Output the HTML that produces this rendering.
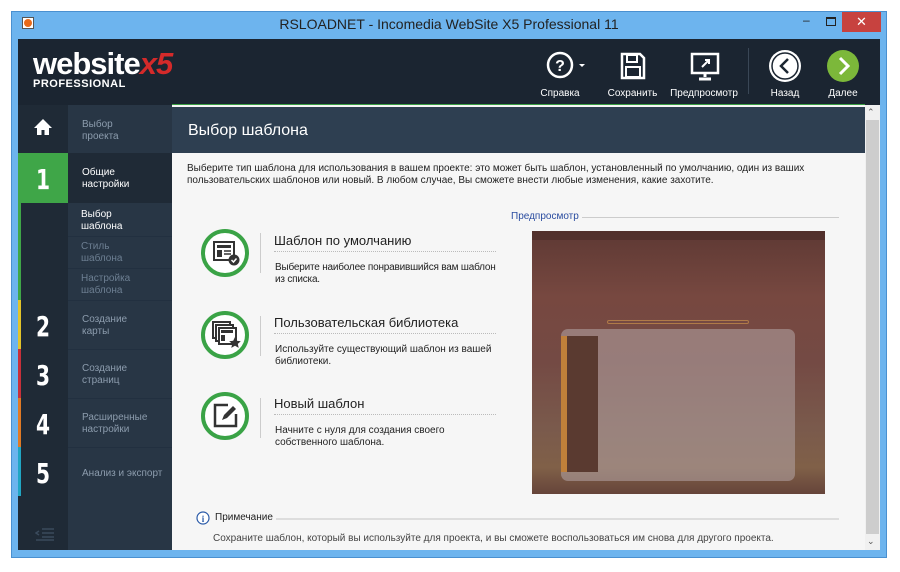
<!DOCTYPE html>
<html><head><meta charset="utf-8"><style>
*{margin:0;padding:0;box-sizing:border-box}
body{width:900px;height:572px;background:#fff;position:relative;overflow:hidden;font-family:"Liberation Sans","DejaVu Sans",sans-serif}
.a{position:absolute}
.win{left:11px;top:11px;width:876px;height:547px;background:#6db4ee;border:1px solid #4a90d0}
.hdr{left:18px;top:39px;width:862px;height:66px;background:#1b2531}
.tb{color:#fff;font-size:10px;text-align:center}
.side1{left:18px;top:105px;width:50px;height:445px;background:#1f2a36}
.side2{left:68px;top:105px;width:104px;height:445px;background:#283645}
.num{left:18px;width:50px;color:#fff;font-size:28px;font-weight:bold;text-align:center;font-family:"DejaVu Sans Condensed","Liberation Sans Narrow",sans-serif;transform:scaleX(.8)}
.lab{left:82px;font-size:10px;color:#8c9cad;line-height:12px}
.sep{left:68px;width:104px;height:1px;background:#223040}
.main{left:172px;top:105px;width:693px;height:445px;background:#f6f6f6}
.band{left:172px;top:107px;width:693px;height:46px;background:#2e3f51}
.t{font-size:11px;color:#222}
.hd{font-size:13px;color:#222}
.ic{width:48px;height:48px;border:4px solid #3aa346;border-radius:50%;background:#fff}
</style></head><body>
<div class="a win"></div>
<div class="a" style="left:22px;top:17px;width:12px;height:12px;background:#fff;border:1px solid #555"><div style="margin:1px;width:8px;height:8px;border-radius:50%;background:#e86a1a"></div></div>
<div class="a" style="left:11px;width:876px;top:16px;text-align:center;font-size:14px;color:#222">RSLOADNET - Incomedia WebSite X5 Professional 11</div>
<div class="a" style="left:803px;top:13px;font-size:12px;color:#222">‒</div>
<div class="a" style="left:826px;top:17px;width:10px;height:9px;border:1px solid #222;border-top-width:2px"></div>
<div class="a" style="left:842px;top:12px;width:39px;height:20px;background:#c7423f;color:#fff;font-size:13px;text-align:center;line-height:19px">✕</div>
<div class="a hdr"></div>
<div class="a" style="left:33px;top:48px;color:#fff;font-size:31px;font-weight:bold;letter-spacing:-1px;line-height:32px">website<span style="color:#d42a2a;font-style:italic">x5</span></div>
<div class="a" style="left:33px;top:78px;color:#fff;font-size:11px;font-weight:bold;letter-spacing:0.5px">PROFESSIONAL</div>
<svg class="a" style="left:545px;top:50px" width="45" height="32"><circle cx="15" cy="15" r="12" fill="none" stroke="#fff" stroke-width="2.5"/><text x="15" y="21" font-size="16" font-weight="bold" fill="#fff" text-anchor="middle" font-family="Liberation Sans">?</text><path d="M34 14h6l-3 3z" fill="#fff"/></svg>
<div class="a tb" style="left:535px;top:88px;width:50px">Справка</div>
<svg class="a" style="left:620px;top:52px" width="26" height="28"><path d="M2 2h18l4 4v20H2z" fill="none" stroke="#fff" stroke-width="2.5"/><rect x="7" y="3" width="10" height="7" fill="none" stroke="#fff" stroke-width="2"/><rect x="6" y="15" width="14" height="10" fill="none" stroke="#fff" stroke-width="2"/></svg>
<div class="a tb" style="left:605px;top:88px;width:55px">Сохранить</div>
<svg class="a" style="left:690px;top:52px" width="30" height="30"><rect x="2" y="2" width="26" height="19" fill="none" stroke="#fff" stroke-width="2.5"/><path d="M15 21v4M9 27h12" stroke="#fff" stroke-width="3"/><path d="M12 15l7-7M15 8h4v4" stroke="#fff" stroke-width="2" fill="none"/></svg>
<div class="a tb" style="left:668px;top:88px;width:72px">Предпросмотр</div>
<div class="a" style="left:748px;top:48px;width:1px;height:46px;background:#3a4756"></div>
<svg class="a" style="left:768px;top:49px" width="34" height="34"><circle cx="17" cy="17" r="16" fill="#fff"/><circle cx="17" cy="17" r="13" fill="none" stroke="#1b2531" stroke-width="1.5"/><path d="M20 10l-7 7 7 7" fill="none" stroke="#1b2531" stroke-width="2.5"/></svg>
<div class="a tb" style="left:765px;top:88px;width:40px">Назад</div>
<svg class="a" style="left:826px;top:49px" width="34" height="34"><circle cx="17" cy="17" r="16" fill="#7cb83a"/><path d="M14 9l8 8-8 8" fill="none" stroke="#fff" stroke-width="3"/></svg>
<div class="a tb" style="left:823px;top:88px;width:40px">Далее</div>
<div class="a" style="left:172px;top:104px;width:693px;height:3px;background:#3a9e44"></div>
<div class="a side1"></div><div class="a side2"></div>
<svg class="a" style="left:33px;top:118px" width="20" height="18"><path d="M10 1L1 10h3v7h4.5v-5h3v5H16v-7h3z" fill="#fff"/></svg>
<div class="a lab" style="top:119px">Выбор<br>проекта</div>
<div class="a" style="left:18px;top:153px;width:50px;height:50px;background:#3fa648"></div>
<div class="a" style="left:68px;top:153px;width:104px;height:50px;background:#1f2a36"></div>
<div class="a num" style="top:163px">1</div>
<div class="a lab" style="top:167px;color:#fff">Общие<br>настройки</div>
<div class="a" style="left:18px;top:203px;width:3px;height:97px;background:#3fa648"></div>
<div class="a lab" style="top:209px;left:81px;color:#fff">Выбор<br>шаблона</div>
<div class="a sep" style="top:236px"></div>
<div class="a lab" style="top:241px;left:81px;color:#6d7f92">Стиль<br>шаблона</div>
<div class="a sep" style="top:268px"></div>
<div class="a lab" style="top:273px;left:81px;color:#6d7f92">Настройка<br>шаблона</div>
<div class="a sep" style="top:300px"></div>
<div class="a" style="left:18px;top:300px;width:3px;height:49px;background:#e2c42a"></div>
<div class="a num" style="top:310px">2</div><div class="a lab" style="top:314px">Создание<br>карты</div>
<div class="a sep" style="top:349px"></div>
<div class="a" style="left:18px;top:349px;width:3px;height:49px;background:#c7303a"></div>
<div class="a num" style="top:359px">3</div><div class="a lab" style="top:363px">Создание<br>страниц</div>
<div class="a sep" style="top:398px"></div>
<div class="a" style="left:18px;top:398px;width:3px;height:49px;background:#e07a25"></div>
<div class="a num" style="top:408px">4</div><div class="a lab" style="top:412px">Расширенные<br>настройки</div>
<div class="a sep" style="top:447px"></div>
<div class="a" style="left:18px;top:447px;width:3px;height:49px;background:#21a6c4"></div>
<div class="a num" style="top:457px">5</div><div class="a lab" style="top:468px">Анализ и экспорт</div>
<svg class="a" style="left:35px;top:527px" width="20" height="14"><path d="M7 2h12M7 6h12M7 10h12M1 13h18M4 4L1 6l3 2" stroke="#3a4a5c" stroke-width="1.5" fill="none"/></svg>
<div class="a main"></div><div class="a band"></div>
<div class="a" style="left:188px;top:122px;color:#fff;font-size:16px">Выбор шаблона</div>
<div class="a t" style="left:187px;top:163px;font-size:10px;line-height:12px;width:640px">Выберите тип шаблона для использования в вашем проекте: это может быть шаблон, установленный по умолчанию, один из ваших пользовательских шаблонов или новый. В любом случае, Вы сможете внести любые изменения, какие захотите.</div>
<div class="a ic" style="left:201px;top:229px"></div>
<svg class="a" style="left:213px;top:241px" width="28" height="26"><rect x="1" y="1" width="20" height="18" fill="none" stroke="#333" stroke-width="2"/><rect x="4" y="4" width="14" height="3" fill="#333"/><rect x="4" y="9" width="5" height="7" fill="#333"/><path d="M11 10h7M11 13h7" stroke="#333" stroke-width="1.5"/><circle cx="21" cy="19" r="5.5" fill="#333"/><path d="M18.5 19l2 2 3-3.5" stroke="#fff" stroke-width="1.5" fill="none"/></svg>
<div class="a" style="left:260px;top:233px;width:1px;height:40px;background:#ccc"></div>
<div class="a hd" style="left:274px;top:233px">Шаблон по умолчанию</div>
<div class="a" style="left:274px;top:251px;width:222px;border-top:1px dotted #bbb"></div>
<div class="a t" style="left:275px;top:262px;font-size:10px;line-height:12px;letter-spacing:-0.2px">Выберите наиболее понравившийся вам шаблон<br>из списка.</div>
<div class="a ic" style="left:201px;top:311px"></div>
<svg class="a" style="left:212px;top:321px" width="30" height="28"><rect x="1" y="1" width="17" height="16" fill="none" stroke="#333" stroke-width="2"/><rect x="4" y="4" width="17" height="16" fill="#fff" stroke="#333" stroke-width="2"/><rect x="7" y="7" width="17" height="16" fill="#fff" stroke="#333" stroke-width="2"/><rect x="9" y="9" width="12" height="3" fill="#333"/><rect x="9" y="14" width="4" height="6" fill="#333"/><path d="M23 16l1.8 3.8 4 .4-3 2.7.9 4-3.7-2.1-3.7 2.1.9-4-3-2.7 4-.4z" fill="#333"/></svg>
<div class="a" style="left:260px;top:316px;width:1px;height:40px;background:#ccc"></div>
<div class="a hd" style="left:274px;top:315px">Пользовательская библиотека</div>
<div class="a" style="left:274px;top:333px;width:222px;border-top:1px dotted #bbb"></div>
<div class="a t" style="left:275px;top:344px;font-size:10px;line-height:12px">Используйте существующий шаблон из вашей<br>библиотеки.</div>
<div class="a ic" style="left:201px;top:392px"></div>
<svg class="a" style="left:213px;top:403px" width="28" height="26"><path d="M15 2H2v21h21V11" fill="none" stroke="#333" stroke-width="2.5"/><path d="M9 17l2-5 9-9 3 3-9 9z" fill="#333"/></svg>
<div class="a" style="left:260px;top:398px;width:1px;height:40px;background:#ccc"></div>
<div class="a hd" style="left:274px;top:396px">Новый шаблон</div>
<div class="a" style="left:274px;top:414px;width:222px;border-top:1px dotted #bbb"></div>
<div class="a t" style="left:275px;top:425px;font-size:10px;line-height:12px">Начните с нуля для создания своего<br>собственного шаблона.</div>
<div class="a" style="left:511px;top:211px;font-size:10px;color:#2a4ca0">Предпросмотр</div>
<div class="a" style="left:582px;top:217px;width:257px;height:1px;background:#ccc"></div>
<div class="a" style="left:532px;top:231px;width:293px;height:263px;background:linear-gradient(180deg,#5e3934 0%,#774840 25%,#744a44 50%,#7a5a4c 75%,#806048 90%,#66443a 100%)"></div>
<div class="a" style="left:532px;top:231px;width:293px;height:9px;background:#4a2c28;opacity:.6"></div>
<div class="a" style="left:607px;top:320px;width:142px;height:4px;border:1px solid #b07a48;border-radius:2px"></div>
<div class="a" style="left:561px;top:329px;width:234px;height:152px;background:rgba(175,158,158,.6);border-radius:7px"></div>
<div class="a" style="left:561px;top:336px;width:37px;height:136px;background:#5a3a30"></div>
<div class="a" style="left:561px;top:336px;width:6px;height:136px;background:#c0803a"></div>
<svg class="a" style="left:196px;top:511px" width="14" height="14"><circle cx="7" cy="7" r="6" fill="#fff" stroke="#2a5aa8" stroke-width="1.2"/><text x="7" y="11" font-size="9" fill="#2a5aa8" text-anchor="middle" font-family="Liberation Serif" font-weight="bold">i</text></svg>
<div class="a t" style="left:215px;top:512px;font-size:10px">Примечание</div>
<div class="a" style="left:276px;top:518px;width:563px;height:2px;background:#ddd"></div>
<div class="a t" style="left:213px;top:533px;font-size:10px;color:#444">Сохраните шаблон, который вы используйте для проекта, и вы сможете воспользоваться им снова для другого проекта.</div>
<div class="a" style="left:865px;top:105px;width:15px;height:445px;background:#f0f0f0"></div>
<div class="a" style="left:866px;top:120px;width:13px;height:414px;background:#cdcdcd"></div>
<div class="a" style="left:867px;top:107px;font-size:9px;color:#555">⌃</div>
<div class="a" style="left:867px;top:536px;font-size:9px;color:#555">⌄</div>
</body></html>
